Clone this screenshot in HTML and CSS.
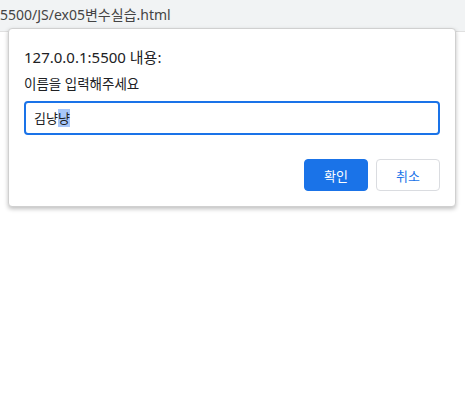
FILE: index.html
```html
<!DOCTYPE html>
<html lang="ko">
<head>
    <meta charset="UTF-8">
    <meta name="viewport" content="width=device-width, initial-scale=1.0">
    <title>ex05변수실습</title>
    <link rel="stylesheet" href="styles.css">
</head>
<body>
    <div class="address-bar">5500/JS/ex05변수실습.html</div>
    <div class="page"></div>

    <div class="dialog">
        <div class="dialog-title">127.0.0.1:5500 내용:</div>
        <div class="dialog-message">이름을 입력해주세요</div>
        <div class="prompt-input">김냥<span class="selected">냥</span></div>
        <div class="buttons">
            <button class="btn btn-ok">확인</button>
            <button class="btn btn-cancel">취소</button>
        </div>
    </div>
</body>
</html>
```

FILE: styles.css
```css
body {
    margin: 0;
    font-family: "Noto Sans", "Noto Sans CJK KR", sans-serif;
    background-color: #fff;
    color: #202124;
}
.address-bar {
    height: 31px;
    line-height: 29px;
    background-color: #f1f3f4;
    color: #444;
    font-size: 14px;
    white-space: nowrap;
    overflow: hidden;
}
.page {
    height: 388px;
    border-top: 1px solid #e0e0e0;
}
.dialog {
    position: absolute;
    left: 8px;
    top: 28px;
    width: 448px;
    height: 179px;
    box-sizing: border-box;
    background: white;
    border: 1px solid #d0d0d0;
    border-radius: 4px;
    box-shadow: 0 2px 4px rgba(0, 0, 0, 0.25);
    padding: 17px 15px 0 15px;
}
.dialog-title {
    font-size: 15px;
    line-height: 22px;
    color: #202124;
}
.dialog-message {
    margin-top: 7px;
    font-size: 13.5px;
    line-height: 18px;
}
.prompt-input {
    margin-top: 8px;
    height: 34px;
    box-sizing: border-box;
    border: 2px solid #1a73e8;
    border-radius: 4px;
    padding: 0 8px;
    font-size: 13px;
    line-height: 30px;
    color: #202124;
}
.selected {
    background-color: #a8c7fa;
}
.buttons {
    display: flex;
    justify-content: flex-end;
    gap: 8px;
    margin-top: 24px;
}
.btn {
    width: 64px;
    height: 32px;
    border-radius: 4px;
    font-family: inherit;
    font-size: 13px;
    cursor: pointer;
}
.btn-ok {
    background-color: #1a73e8;
    border: 1px solid #1a73e8;
    color: white;
}
.btn-cancel {
    background-color: white;
    border: 1px solid #dadce0;
    color: #1a73e8;
}
```
